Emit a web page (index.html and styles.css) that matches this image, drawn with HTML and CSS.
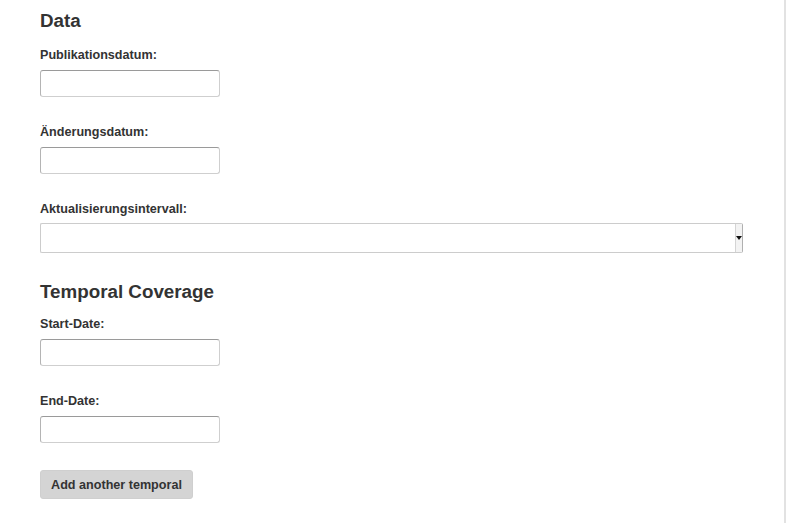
FILE: index.html
```html
<!DOCTYPE html>
<html lang="de">
<head>
<meta charset="utf-8">
<title>Data</title>
<link rel="stylesheet" href="styles.css">
</head>
<body>
<div class="page">
  <main class="content">
    <h2 class="section-title">Data</h2>
    <div class="control-group">
      <label class="control-label" for="pub">Publikationsdatum:</label>
      <input class="text-input" id="pub" type="text">
    </div>
    <div class="control-group">
      <label class="control-label" for="mod">Änderungsdatum:</label>
      <input class="text-input" id="mod" type="text">
    </div>
    <div class="control-group control-group-select">
      <label class="control-label" for="freq">Aktualisierungsintervall:</label>
      <div class="select-wrap">
        <select class="select-input" id="freq"><option></option></select>
        <span class="select-arrow"><span class="tri"></span></span>
      </div>
    </div>

    <h2 class="section-title section-title-second">Temporal Coverage</h2>
    <div class="control-group">
      <label class="control-label" for="start">Start-Date:</label>
      <input class="text-input" id="start" type="text">
    </div>
    <div class="control-group">
      <label class="control-label" for="end">End-Date:</label>
      <input class="text-input" id="end" type="text">
    </div>
    <button class="btn" type="button">Add another temporal</button>
  </main>
  <div class="divider"></div>
</div>
</body>
</html>
```

FILE: styles.css
```css
html, body {
  margin: 0;
  padding: 0;
  background: #ffffff;
}
body {
  font-family: "Liberation Sans", Arial, sans-serif;
  color: #333333;
}
.page {
  display: flex;
  height: 523px;
}
.content {
  width: 702px;
  padding: 0 0 0 40px;
  margin-right: 42px;
}
.divider {
  width: 2px;
  background: #e2e2e2;
  height: 523px;
}
.section-title {
  margin: 11px 0 14px 0;
  font-size: 18.8px;
  line-height: 20px;
  font-weight: bold;
}
.section-title-second {
  margin-top: 29px;
  margin-bottom: 12px;
}
.control-group {
  display: flex;
  flex-direction: column;
  align-items: flex-start;
  margin-bottom: 25px;
}
.control-label {
  display: block;
  font-size: 12.6px;
  line-height: 20px;
  font-weight: bold;
  margin-bottom: 5px;
}
.control-group-select .control-label {
  margin-bottom: 4px;
}
.text-input {
  box-sizing: border-box;
  width: 180px;
  height: 27px;
  margin: 0;
  padding: 3px 6px;
  border: 1px solid #cfcfcf;
  border-top-color: #9a9a9a;
  border-left-color: #b4b4b4;
  border-radius: 3px;
  background: #fff;
  font: 12px "Liberation Sans", Arial, sans-serif;
}
.select-wrap {
  position: relative;
  width: 703px;
  height: 30px;
}
.select-input {
  box-sizing: border-box;
  width: 703px;
  height: 30px;
  margin: 0;
  border: 1px solid #cccccc;
  border-right-color: #b0b0b0;
  border-radius: 2px;
  background: #fff;
  -webkit-appearance: none;
  appearance: none;
  font: 12px "Liberation Sans", Arial, sans-serif;
}
.select-arrow {
  position: absolute;
  top: 1px;
  right: 1px;
  bottom: 1px;
  width: 6px;
  border-left: 1px solid #d4d4d4;
  background: #f3f3f3;
  display: flex;
  align-items: center;
  justify-content: center;
  pointer-events: none;
}
.tri {
  width: 0;
  height: 0;
  border-left: 3px solid transparent;
  border-right: 3px solid transparent;
  border-top: 4px solid #111;
}
.btn {
  display: block;
  box-sizing: border-box;
  width: 153px;
  height: 29px;
  margin: 27px 0 0 0;
  padding: 0;
  border: 1px solid #cfcfcf;
  border-radius: 3px;
  background: #d4d4d4;
  color: #333;
  font: bold 12.6px "Liberation Sans", Arial, sans-serif;
}
```
